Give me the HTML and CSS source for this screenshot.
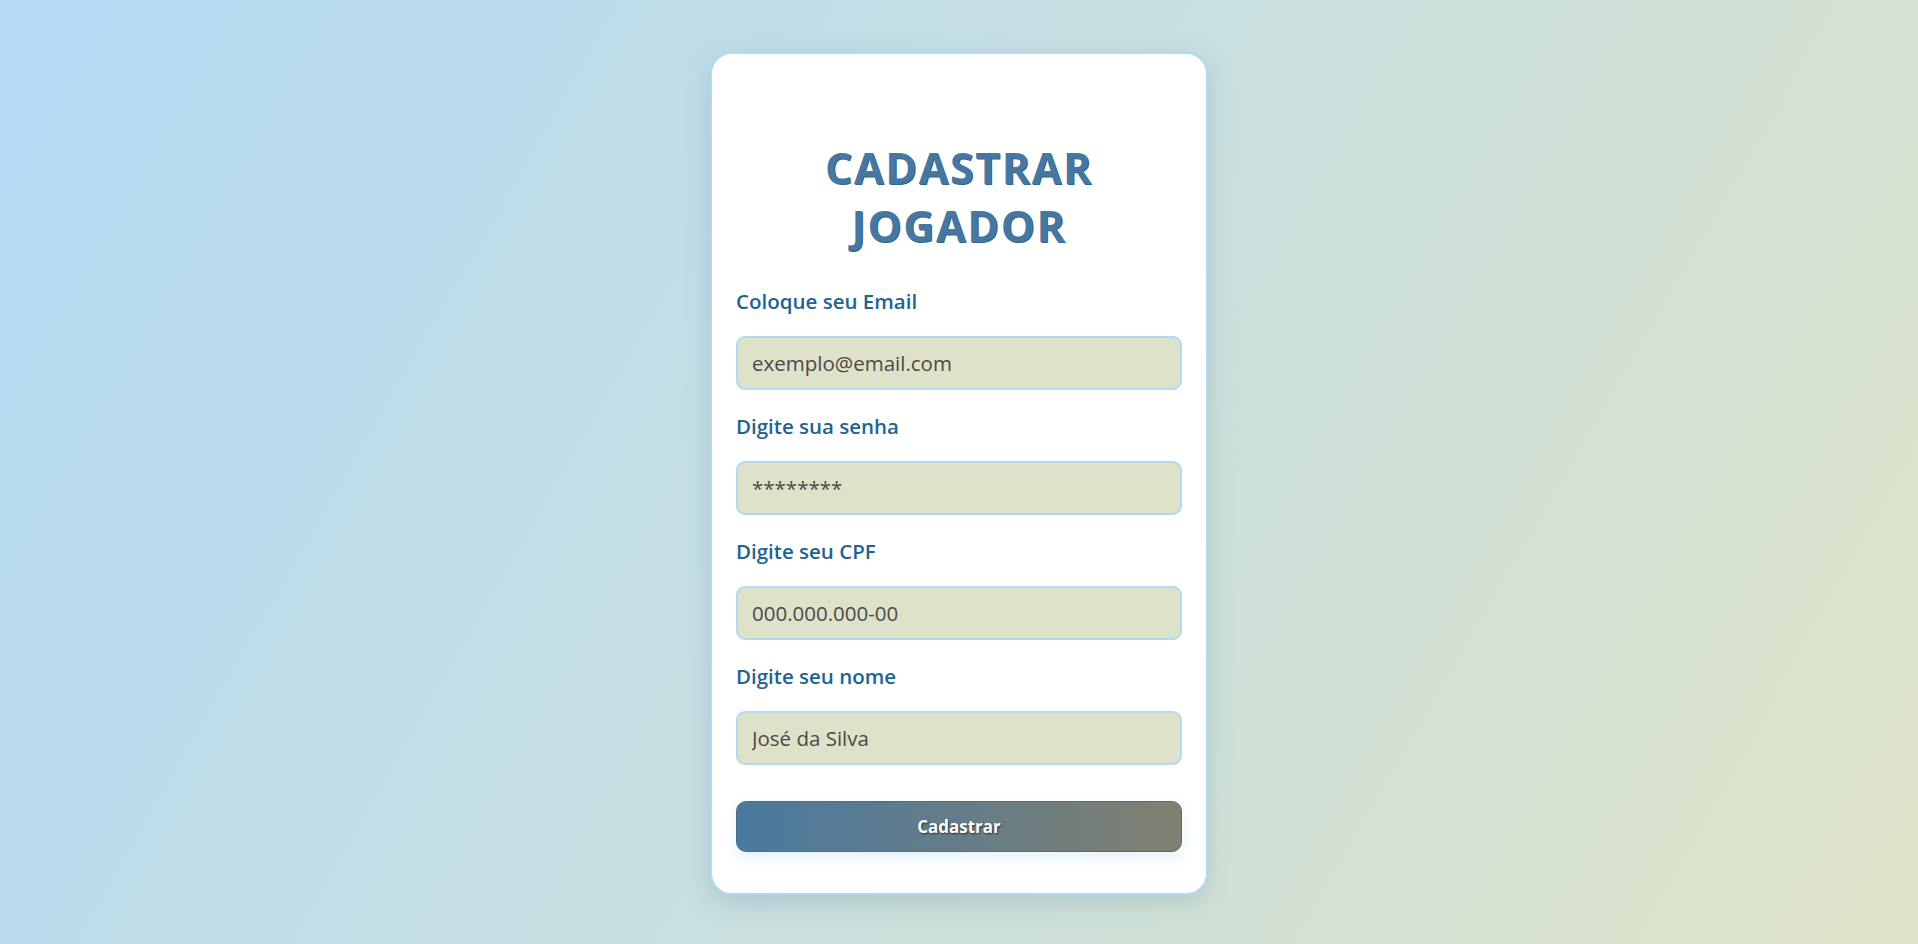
FILE: index.html
```html
<!DOCTYPE html>
<html lang="pt-BR">
<head>
  <meta charset="UTF-8">
  <meta name="viewport" content="width=device-width, initial-scale=1.0">
  <title>Cadastrar Jogador</title>
  <link rel="stylesheet" href="styles.css">
</head>
<body>
  <main class="card">
    <h1 class="title">Cadastrar Jogador</h1>
    <form class="form">
      <div class="field">
        <label for="email">Coloque seu Email</label>
        <input type="email" id="email" placeholder="exemplo@email.com">
      </div>
      <div class="field">
        <label for="senha">Digite sua senha</label>
        <input type="text" id="senha" placeholder="********">
      </div>
      <div class="field">
        <label for="cpf">Digite seu CPF</label>
        <input type="text" id="cpf" placeholder="000.000.000-00">
      </div>
      <div class="field">
        <label for="nome">Digite seu nome</label>
        <input type="text" id="nome" placeholder="José da Silva">
      </div>
      <button type="button" class="submit">Cadastrar</button>
    </form>
  </main>
</body>
</html>
```

FILE: styles.css
```css
* {
  box-sizing: border-box;
}

body {
  font-family: "Open Sans", "Noto Sans", sans-serif;
  margin: 0;
  padding: 0;
  height: 100vh;
  display: flex;
  align-items: center;
  justify-content: center;
  background: linear-gradient(120deg, #b5daf5 0%, #c5dfe2 45%, #dfe4c8 100%);
}

.card {
  width: 498px;
  height: 843px;
  margin-top: 2px;
  background-color: #fff;
  border: 2px solid #b3d9f5;
  border-radius: 22px;
  padding: 0 24px 41px;
  box-shadow: 0 8px 24px rgba(90, 130, 150, 0.25);
}

.title {
  margin: 85px 0 32px;
  font-size: 43px;
  line-height: 58px;
  font-weight: 700;
  letter-spacing: 1.6px;
  text-transform: uppercase;
  text-align: center;
  color: #4577a0;
  text-shadow: 1px 1px 0 #2f6690;
}

.form {
  display: flex;
  flex-direction: column;
}

.field {
  display: flex;
  flex-direction: column;
  margin-bottom: 22px;
}

.field label {
  font-size: 20.5px;
  line-height: 28px;
  font-weight: 600;
  color: #1f6391;
  margin-bottom: 21px;
}

.field input {
  height: 54px;
  padding: 0 14px;
  font-family: inherit;
  font-size: 20.5px;
  color: #444;
  background-color: #dee2c9;
  border: 2px solid #b3d9f5;
  border-radius: 9px;
  outline: none;
}

.field input::placeholder {
  color: #4a4a4a;
}

.submit {
  margin-top: 14px;
  height: 51px;
  font-family: inherit;
  font-size: 17px;
  font-weight: 700;
  color: #fff;
  text-shadow: 1px 1px 2px rgba(0, 0, 0, 0.6);
  background: linear-gradient(90deg, #4a79a0, #808070);
  border: 1px solid #5a6c78;
  border-radius: 10px;
  box-shadow: 0 6px 14px rgba(179, 217, 245, 0.35);
  cursor: pointer;
}
```
